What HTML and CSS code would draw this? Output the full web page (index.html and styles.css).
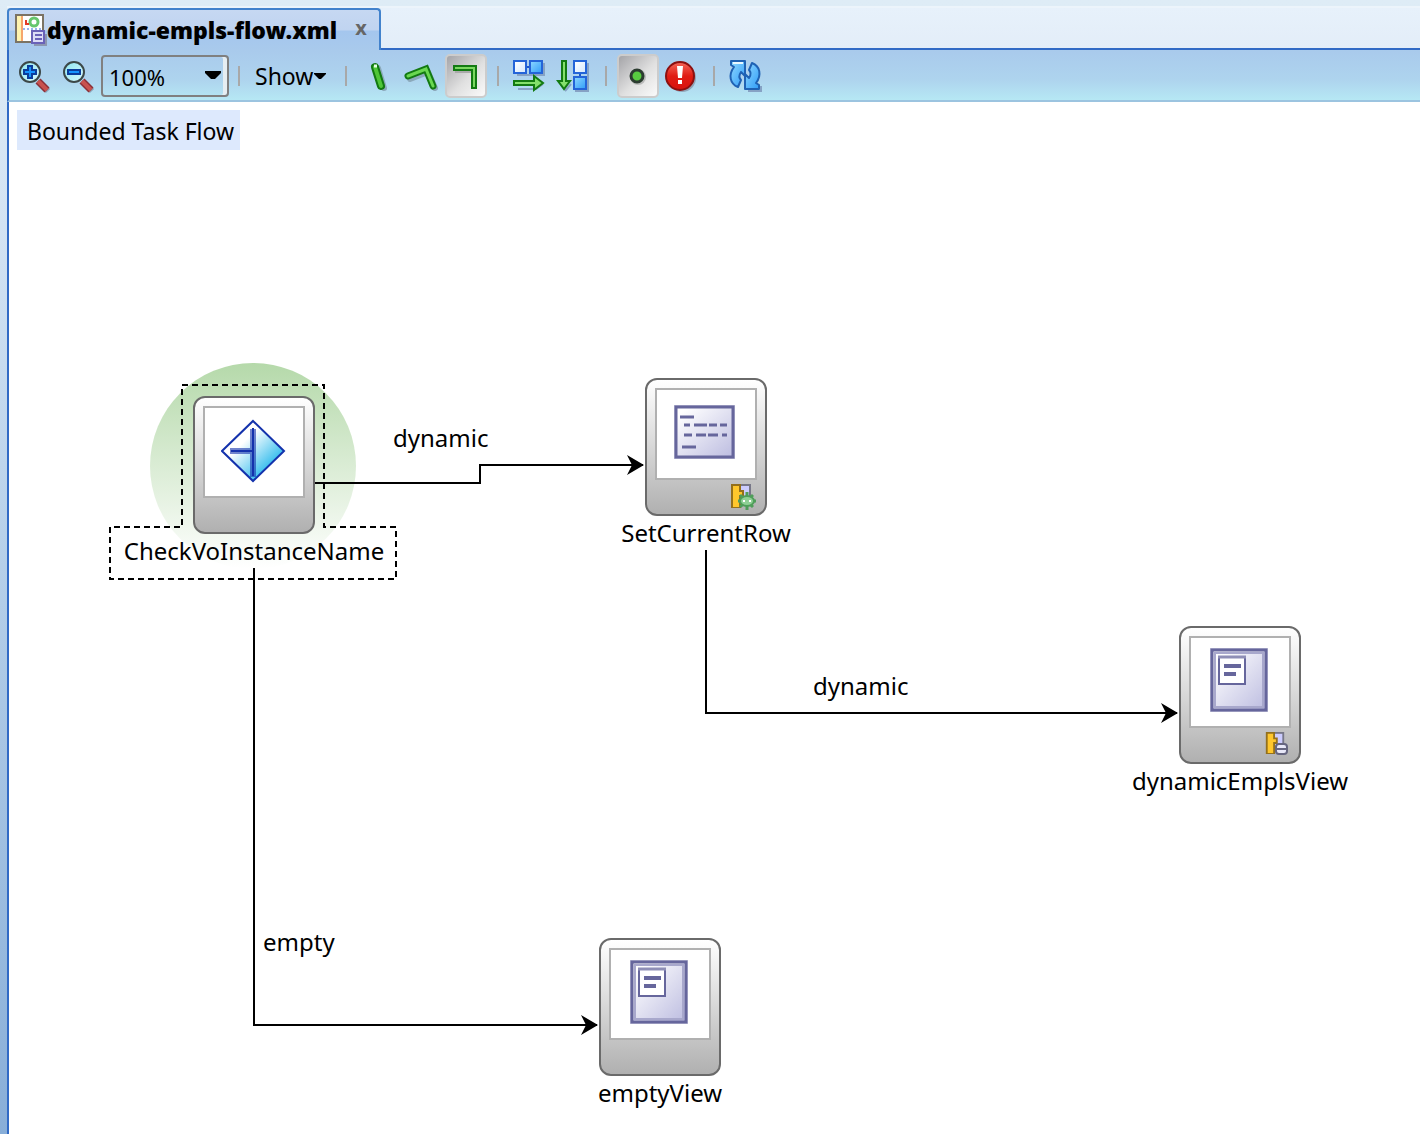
FILE: index.html
```html
<!DOCTYPE html>
<html lang="en">
<head>
<meta charset="utf-8">
<title>dynamic-empls-flow.xml</title>
<link rel="stylesheet" href="styles.css">
</head>
<body>
<svg class="defs" width="0" height="0" aria-hidden="true">
  <defs>
    <linearGradient id="lens" x1="0" y1="0" x2="1" y2="1"><stop offset="0" stop-color="#8fe6f0"/><stop offset="1" stop-color="#d8f8ff"/></linearGradient>
    <linearGradient id="blue" x1="0" y1="0" x2="1" y2="1"><stop offset="0" stop-color="#8fd8ff"/><stop offset="1" stop-color="#2f9cf8"/></linearGradient>
    <linearGradient id="pale" x1="0" y1="0" x2="1" y2="1"><stop offset="0" stop-color="#ffffff"/><stop offset="1" stop-color="#d4e8ff"/></linearGradient>
    <linearGradient id="red" x1="0" y1="0" x2="0" y2="1"><stop offset="0" stop-color="#f4685a"/><stop offset=".5" stop-color="#e01c14"/><stop offset="1" stop-color="#d8120c"/></linearGradient>
    <linearGradient id="violet" x1="0" y1="0" x2="1" y2="1"><stop offset=".1" stop-color="#ffffff"/><stop offset="1" stop-color="#bcbce0"/></linearGradient>
    <linearGradient id="router" x1="0" y1="0" x2="1" y2="1"><stop offset=".35" stop-color="#ffffff"/><stop offset=".75" stop-color="#3fc0ee"/></linearGradient>
    <linearGradient id="halo" x1="0" y1="0" x2="0" y2="1"><stop offset="0" stop-color="#b5d9aa"/><stop offset="1" stop-color="#ffffff"/></linearGradient>
    <symbol id="page-art" viewBox="0 0 60 66">
      <rect x="1" y="1" width="58" height="64" fill="#c6c6dc"/>
      <rect x="3" y="3" width="54" height="60" fill="url(#violet)" stroke="#66669c" stroke-width="3"/>
      <rect x="6" y="6" width="48" height="54" fill="none" stroke="#a8a8cc" stroke-width="2"/>
      <rect x="10" y="10" width="26" height="27" fill="#fff" stroke="#66669c" stroke-width="2"/>
      <path d="M9 10h28" stroke="#8e8eb6" stroke-width="3"/>
      <path d="M15 19h17M15 27h12" stroke="#66669c" stroke-width="4"/>
    </symbol>
    <symbol id="puzzle" viewBox="0 0 20 24">
      <rect x="8" y="1" width="11" height="15" fill="#ccccff" stroke="#777788" stroke-width="2"/>
      <path d="M1 1h8v6h3v5H9v12H1z" fill="#ffc72c" stroke="#94701c" stroke-width="2"/>
    </symbol>
  </defs>
</svg>
<main class="editor">
  <header class="tabs">
    <div class="tab">
      <svg class="file-icon" viewBox="0 0 32 32" aria-hidden="true">
        <rect x="1" y="1" width="27" height="27" fill="#fff" stroke="#7b7364" stroke-width="2"/>
        <path d="M2 2h5v25H2z" fill="#fff3ae"/><path d="M7 2v25" stroke="#f6a66c" stroke-width="2"/>
        <circle cx="19" cy="8" r="4" fill="none" stroke="#66c66c" stroke-width="3"/>
        <path d="M11 6v4h3" fill="none" stroke="#e23c24" stroke-width="2"/>
        <path d="M8 15h18" stroke="#98b4ec" stroke-width="2" stroke-dasharray="2 2"/>
        <path d="M19 31h12V20" fill="none" stroke="#8c96b0" stroke-width="2"/>
        <rect x="17" y="17" width="12" height="12" fill="#dcdcf6" stroke="#6a62b8" stroke-width="2"/>
        <path d="M20 21h7M20 25h7" stroke="#6a62b8" stroke-width="2"/>
      </svg>
      <span class="tab-title">dynamic-empls-flow.xml</span>
      <button class="tab-close" type="button" aria-label="Close tab">x</button>
    </div>
    <div class="tab-rest"></div>
  </header>
  <div class="toolbar" role="toolbar" aria-label="Diagram tools">
    <button class="tool" type="button" aria-label="Zoom in">
      <svg viewBox="0 0 36 36"><path d="M25 26l7 7" stroke="#8ca0b4" stroke-width="6"/><circle cx="14" cy="14" r="10" fill="url(#lens)" stroke="#3c4848" stroke-width="2"/><path d="M22 23l9 9" stroke="#8a3038" stroke-width="7"/><path d="M22 23l9 9" stroke="#c8524e" stroke-width="4"/><path d="M14 7v14M7 14h14" stroke="#0b3c9c" stroke-width="6"/><path d="M14 9v10M9 14h10" stroke="#1694ff" stroke-width="2"/></svg>
    </button>
    <button class="tool" type="button" aria-label="Zoom out">
      <svg viewBox="0 0 36 36"><path d="M25 26l7 7" stroke="#8ca0b4" stroke-width="6"/><circle cx="14" cy="14" r="10" fill="url(#lens)" stroke="#3c4848" stroke-width="2"/><path d="M22 23l9 9" stroke="#8a3038" stroke-width="7"/><path d="M22 23l9 9" stroke="#c8524e" stroke-width="4"/><path d="M7 14h14" stroke="#0b3c9c" stroke-width="6"/><path d="M9 14h10" stroke="#1694ff" stroke-width="2"/></svg>
    </button>
    <div class="zoom">
      <select class="zoom-select" aria-label="Zoom level"><option>100%</option><option>200%</option></select>
      <svg class="zoom-arrow" viewBox="0 0 16 9" aria-hidden="true"><path d="M0 0h16v2l-6 6H6L0 2z"/></svg>
    </div>
    <span class="sep"></span>
    <button class="show" type="button">Show<svg class="show-arrow" viewBox="0 0 12 7" aria-hidden="true"><path d="M0 0h12v1L7 6H5L0 1z"/></svg></button>
    <span class="sep"></span>
    <button class="tool" type="button" aria-label="Straight lines">
      <svg viewBox="0 0 36 36"><path d="M18 10l6 20" stroke="#8ba9bb" stroke-width="6" stroke-linecap="round"/><path d="M15 9l6 19" stroke="#137a12" stroke-width="8" stroke-linecap="round"/><path d="M15 9l6 19" stroke="#4fc638" stroke-width="4" stroke-linecap="round"/><path d="M14 8h3" stroke="#e4ffe0" stroke-width="3"/></svg>
    </button>
    <button class="tool" type="button" aria-label="Angled lines">
      <svg viewBox="0 0 36 36" fill="none" stroke-linecap="round"><path d="M6 21l18-7 7 16" stroke="#8ba9bb" stroke-width="6"/><path d="M4 18l18-7 7 17" stroke="#137a12" stroke-width="7"/><path d="M4 18l18-7 7 17" stroke="#6ad850" stroke-width="3"/></svg>
    </button>
    <button class="tool pressed" type="button" aria-label="Orthogonal lines" aria-pressed="true">
      <svg viewBox="0 0 36 36" fill="none"><path d="M7 13h20v18" stroke="#aaa" stroke-width="4"/><path d="M5 10h21v21" stroke="#137a12" stroke-width="6"/><path d="M7 10h19v19" stroke="#7bd860" stroke-width="2"/></svg>
    </button>
    <span class="sep"></span>
    <button class="tool" type="button" aria-label="Lay out horizontally">
      <svg viewBox="0 0 36 36"><path d="M5 17h27V5M6 31h18l7-5" fill="none" stroke="#86a2c4" stroke-width="2"/><path d="M13 9h6" stroke="#1f55c8" stroke-width="2"/><rect x="2" y="3" width="12" height="12" fill="url(#pale)" stroke="#2464d8" stroke-width="2"/><rect x="18" y="3" width="12" height="12" fill="url(#blue)" stroke="#2464d8" stroke-width="2"/><path d="M2 23h20v-5l9 7-9 7v-5H2z" fill="#84e06c" stroke="#137a12" stroke-width="2"/></svg>
    </button>
    <button class="tool" type="button" aria-label="Lay out vertically">
      <svg viewBox="0 0 36 36"><path d="M19 33h13V5M9 33l6-7" fill="none" stroke="#86a2c4" stroke-width="2"/><path d="M24 14v6" stroke="#1f55c8" stroke-width="2"/><rect x="18" y="3" width="12" height="12" fill="url(#pale)" stroke="#2464d8" stroke-width="2"/><rect x="18" y="19" width="12" height="12" fill="url(#blue)" stroke="#2464d8" stroke-width="2"/><path d="M6 3h4v20h4l-6 8-6-8h4z" fill="#84e06c" stroke="#137a12" stroke-width="2"/></svg>
    </button>
    <span class="sep"></span>
    <button class="tool pressed" type="button" aria-label="Show information" aria-pressed="true">
      <svg viewBox="0 0 36 36"><circle cx="18" cy="19" r="8" fill="#bbb"/><circle cx="17" cy="18" r="6" fill="#58cc40" stroke="#2c3c30" stroke-width="3"/></svg>
    </button>
    <button class="tool" type="button" aria-label="Show errors">
      <svg viewBox="0 0 36 36"><circle cx="18" cy="20" r="14" fill="#8fa5b8"/><circle cx="16" cy="18" r="14" fill="url(#red)" stroke="#8c1010" stroke-width="2"/><path d="M13 8h6l-1 12h-4zM14 22h4v4h-4z" fill="#fff"/></svg>
    </button>
    <span class="sep"></span>
    <button class="tool" type="button" aria-label="Refresh">
      <svg viewBox="0 0 36 36"><path d="M20 33h13v-5" fill="none" stroke="#86a2c4" stroke-width="2"/><g fill="url(#blue)" stroke="#1f62b4" stroke-width="2" stroke-linejoin="round"><path d="M3 3h14v15l-4-4c-2 3-2 6 0 8l-3 7C2 26 0 17 6 9L3 7z"/><path d="M31 31H17V16l4 4c2-3 2-6 0-8l3-7c8 3 10 12 4 20l3 2z"/></g><path d="M5 5h10" stroke="#e8f8ff" stroke-width="2"/></svg>
    </button>
  </div>
  <section class="canvas" aria-label="Task flow diagram">
    <svg class="links" aria-hidden="true">
      <defs><marker id="tip" markerUnits="userSpaceOnUse" markerWidth="20" markerHeight="22" refX="17" refY="11" orient="auto"><path d="M1 1l17 10L1 21l5-10z"/></marker></defs>
      <circle cx="244" cy="364" r="103" fill="url(#halo)"/>
      <path class="selection" d="M173 283h142v142h72v52H101v-52h72z"/>
      <path class="link" d="M306 381h165v-18h163"/>
      <path class="link" d="M697 448v163h471"/>
      <path class="link" d="M245 466v457h343"/>
    </svg>
    <h1 class="flow-kind">Bounded Task Flow</h1>
    <span class="link-label link-dynamic-row">dynamic</span>
    <span class="link-label link-dynamic-view">dynamic</span>
    <span class="link-label link-empty">empty</span>
    <div class="node node-check">
      <div class="card"><div class="screen">
        <svg width="66" height="66" viewBox="0 0 66 66"><path d="M32 2l31 30-31 30L1 32z" fill="url(#router)" stroke="#1432ac" stroke-width="2"/><path d="M32 10v48M9 32h23" stroke="#1432ac" stroke-opacity=".6" stroke-width="6"/><path d="M32 9v48M10 32h22" stroke="#1432ac" stroke-width="2"/></svg>
      </div></div>
      <span class="name">CheckVoInstanceName</span>
    </div>
    <div class="node node-row">
      <div class="card"><div class="screen">
        <svg class="raised" width="64" height="54" viewBox="0 0 64 54"><rect x="1" y="0" width="61" height="54" fill="#c0c0d8"/><rect x="3" y="2" width="57" height="50" fill="url(#violet)" stroke="#66669c" stroke-width="3"/><path d="M7 12h14M11 20h6M21 20h13M36 20h8M47 20h7M11 30h8M23 30h10M35 30h10M49 30h5M9 42h14" stroke="#66669c" stroke-width="3"/></svg>
      </div>
      <svg class="badge" viewBox="0 0 26 26"><use href="#puzzle" width="20" height="24"/><path d="M16 8v18M7 17h18M9 11l13 12M22 11L9 23" stroke="#4f9e5a" stroke-width="3"/><ellipse cx="16" cy="17" rx="7" ry="5" fill="#8fd096" stroke="#4f9e5a" stroke-width="2"/><path d="M12 17h2M18 17h2" stroke="#fff" stroke-width="2"/></svg></div>
      <span class="name">SetCurrentRow</span>
    </div>
    <div class="node node-view">
      <div class="card"><div class="screen"><svg class="raised" width="60" height="66"><use href="#page-art"/></svg></div>
      <svg class="badge" viewBox="0 0 26 26"><use href="#puzzle" width="20" height="22"/><rect x="11" y="12" width="11" height="10" rx="3" fill="#e8e8f8" stroke="#666680" stroke-width="2"/><path d="M11 17h11" stroke="#666680" stroke-width="2"/></svg></div>
      <span class="name">dynamicEmplsView</span>
    </div>
    <div class="node node-empty">
      <div class="card"><div class="screen"><svg class="raised" width="60" height="66"><use href="#page-art"/></svg></div></div>
      <span class="name">emptyView</span>
    </div>
  </section>
</main>
</body>
</html>
```
FILE: styles.css
```css
* { box-sizing: border-box; }

body {
  margin: 0;
  min-height: 100vh;
  display: flex;
  padding: 6px 0 0 7px;
  background: linear-gradient(#deecf6, #d3e3f3 20%, #b5cfe9 50%, #88aed8);
  color: #000;
  font-family: "Noto Sans", "Open Sans", sans-serif;
  font-size: 24px;
}

button, select { margin: 0; padding: 0; border: 0; background: none; color: inherit; font: inherit; }
.defs { position: absolute; }

.editor { flex: 1; min-width: 0; display: flex; flex-direction: column; }

.tabs { display: flex; height: 44px; border-top: 2px solid #ecf4fb; }
.tab {
  display: flex;
  align-items: center;
  width: 374px;
  padding: 0 10px 0 6px;
  border: 2px solid #4282cc;
  border-bottom: 0;
  border-radius: 4px 4px 0 0;
  background: linear-gradient(#c6d8f2 0, #c0d4f0 20px, #a4c6ee 21px, #a9caec);
}
.file-icon { width: 32px; height: 32px; }
.tab-title { flex: 1; font-size: 23px; font-weight: 900; line-height: 28px; white-space: nowrap; }
.tab-close { width: 16px; padding-bottom: 4px; color: #666; font-size: 20px; font-weight: 700; line-height: 24px; }
.tab-rest { flex: 1; border-bottom: 2px solid #316ac5; background: linear-gradient(#e7f1fb, #e3edf8); }

.toolbar {
  display: flex;
  align-items: center;
  height: 52px;
  padding: 2px 0 0 3px;
  border-left: 2px solid #316ac5;
  border-bottom: 2px solid #9cc4e0;
  background: linear-gradient(#a9caec, #aed4ee 60%, #b6e8f4);
}
.tool { display: grid; place-items: center; width: 44px; height: 44px; }
.tool svg { width: 36px; height: 36px; }
.pressed { width: 42px; margin: 0 1px; border: 2px solid #ccc; border-radius: 5px; background: linear-gradient(135deg, #a4a4a8, #e0e0e0 55%, #fafafa); }
.sep { flex: none; width: 2px; height: 20px; margin: 0 9px; background: #a8a8a8; }
.zoom { position: relative; width: 128px; margin-left: 1px; }
.zoom-select {
  appearance: none;
  display: block;
  width: 100%;
  height: 42px;
  padding: 2px 0 0 6px;
  border: 2px solid #808080;
  border-radius: 4px;
  box-shadow: inset -4px 0 #e6eef2;
  font-size: 22px;
}
.zoom-arrow { position: absolute; top: 16px; right: 8px; width: 16px; height: 9px; pointer-events: none; }
.show { display: flex; align-items: center; gap: 1px; width: 87px; height: 40px; padding-left: 6px; font-size: 23px; }
.show-arrow { width: 12px; height: 7px; }

.canvas { position: relative; flex: 1; min-height: 1032px; overflow: hidden; border-left: 2px solid #316ac5; background: #fff; }
.links { position: absolute; inset: 0; width: 100%; height: 100%; }
.link { fill: none; stroke: #000; stroke-width: 2; marker-end: url(#tip); }
.selection { fill: none; stroke: #000; stroke-width: 2; stroke-dasharray: 6 4; }
.flow-kind {
  position: absolute;
  left: 8px;
  top: 8px;
  margin: 0;
  padding: 2px 6px 0 10px;
  background: #dde9fd;
  font-size: 23px;
  font-weight: 400;
  line-height: 38px;
}
.link-label { position: absolute; line-height: 32px; }
.link-dynamic-row { left: 384px; top: 320px; }
.link-dynamic-view { left: 804px; top: 568px; }
.link-empty { left: 254px; top: 824px; }

.node { position: absolute; display: flex; flex-direction: column; align-items: center; width: 122px; }
.node-check { left: 184px; top: 294px; }
.node-row { left: 636px; top: 276px; }
.node-view { left: 1170px; top: 524px; }
.node-empty { left: 590px; top: 836px; }
.card {
  position: relative;
  width: 122px;
  height: 138px;
  padding: 8px;
  border: 2px solid #6a6a6a;
  border-radius: 12px;
  background: linear-gradient(#fff, #b0b0b0);
}
.screen { display: grid; place-items: center; height: 92px; border: 2px solid #b0b0b0; background: #fff; }
.raised { margin: 0 2px 4px 0; }
.badge { position: absolute; right: 8px; bottom: 4px; width: 26px; height: 26px; }
.name { line-height: 34px; white-space: nowrap; }
```
